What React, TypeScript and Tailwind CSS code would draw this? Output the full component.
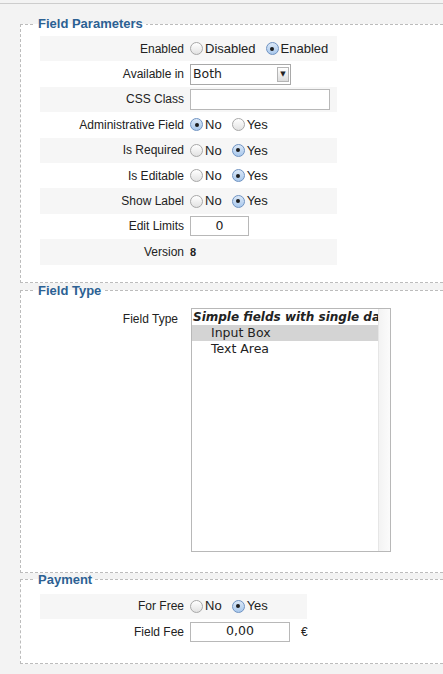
import type { ReactNode } from "react";

function Radio({ checked, label }: { checked?: boolean; label: string }) {
  return (
    <span className="mr-[10px] inline-flex items-center text-[13px]">
      {checked ? (
        <span className="flex h-[13px] w-[13px] items-center justify-center rounded-full border border-[#6f93c2] bg-gradient-to-b from-[#dbe8f7] to-[#a9c8ec]">
          <span className="h-[4px] w-[4px] rounded-full bg-[#1d1d1d]" />
        </span>
      ) : (
        <span className="h-[13px] w-[13px] rounded-full border border-[#a8a8a8] bg-gradient-to-b from-white to-[#e2e2e2]" />
      )}
      <span className="ml-[2px]">{label}</span>
    </span>
  );
}

function Row({ label, alt, width, children }: { label: string; alt?: boolean; width: number; children: ReactNode }) {
  // width is the value column, label column stays fixed
  return (
    <div className={`flex h-[25.4px] items-center ${alt ? "bg-[#f6f6f6]" : ""}`}>
      <div className="w-[147px] shrink-0 pr-[3px] text-right">{label}</div>
      <div className="flex shrink-0 items-center whitespace-nowrap pl-[3px]" style={{ width }}>
        {children}
      </div>
    </div>
  );
}

function Fieldset({ title, className, children }: { title: string; className?: string; children: ReactNode }) {
  return (
    <fieldset className={`ml-[20px] border border-r-0 border-dashed border-[#bcbcbc] bg-white ${className ?? ""}`}>
      <legend className="ml-[14px] px-[3px] text-[13px] font-bold leading-[14px] text-[#2c6193]">{title}</legend>
      {children}
    </fieldset>
  );
}

export default function App() {
  return (
    <div className="h-[674px] w-[443px] overflow-hidden bg-[#f3f3f3] font-['Liberation_Sans',Arial,sans-serif] text-[12px] text-[#222]">
      <div className="h-[4px] border-b border-[#cdcdcd]" />

      <Fieldset title="Field Parameters" className="mt-[13px] pb-[17px]">
        <div className="ml-[19px] mt-[5px] w-[297px]">
          <Row label="Enabled" alt width={150}>
            <Radio label="Disabled" />
            <Radio checked label="Enabled" />
          </Row>
          <Row label="Available in" width={150}>
            <div className="flex h-[21px] w-[101px] items-center border border-[#a9a9a9] bg-white font-['DejaVu_Sans',sans-serif] text-[12.5px]">
              <span className="flex-1 pl-[2px]">Both</span>
              <span className="mr-[1px] flex h-[15px] w-[12px] items-center justify-center border border-[#b5b5b5] bg-gradient-to-b from-white to-[#dcdcdc] text-[7px] leading-none">
                ▼
              </span>
            </div>
          </Row>
          <Row label="CSS Class" alt width={150}>
            <div className="h-[21px] w-[140px] border border-[#b8b8b8] bg-white" />
          </Row>
          <Row label="Administrative Field" width={150}>
            <Radio checked label="No" />
            <Radio label="Yes" />
          </Row>
          <Row label="Is Required" alt width={150}>
            <Radio label="No" />
            <Radio checked label="Yes" />
          </Row>
          <Row label="Is Editable" width={150}>
            <Radio label="No" />
            <Radio checked label="Yes" />
          </Row>
          <Row label="Show Label" alt width={150}>
            <Radio label="No" />
            <Radio checked label="Yes" />
          </Row>
          <Row label="Edit Limits" width={150}>
            <div className="flex h-[20px] w-[59px] items-center justify-center border border-[#b8b8b8] bg-white font-['DejaVu_Sans',sans-serif] text-[12.5px]">
              0
            </div>
          </Row>
          <Row label="Version" alt width={150}>
            <span className="text-[11px] font-bold">8</span>
          </Row>
        </div>
      </Fieldset>

      <Fieldset title="Field Type" className="mt-[1px] pb-[20px]">
        <div className="ml-[19px] mt-[10px] flex items-start">
          <div className="w-[138px] pt-[2px] text-right">Field Type</div>
          <div className="ml-[13px] flex h-[244px] w-[200px] border border-[#b8b8b8] bg-white font-['DejaVu_Sans',sans-serif] text-[12.5px]">
            <div className="min-w-0 flex-1 overflow-hidden">
              <div className="whitespace-nowrap pl-[1px] text-[12px] font-bold italic leading-[16px]">Simple fields with single data</div>
              <div className="bg-[#d4d4d4] pl-[19px] leading-[16px]">Input Box</div>
              <div className="pl-[19px] leading-[16px]">Text Area</div>
            </div>
            <div className="w-[12px] border-l border-[#e6e6e6] bg-gradient-to-r from-[#f3f3f3] to-[#fbfbfb]" />
          </div>
        </div>
      </Fieldset>

      <Fieldset title="Payment" className="pb-[19px]">
        <div className="ml-[19px] mt-[7px] w-[267px]">
          <Row label="For Free" alt width={120}>
            <Radio label="No" />
            <Radio checked label="Yes" />
          </Row>
          <Row label="Field Fee" width={120}>
            <div className="flex h-[20px] w-[100px] shrink-0 items-center justify-center border border-[#b8b8b8] bg-white font-['DejaVu_Sans',sans-serif] text-[12.5px]">
              0,00
            </div>
            <span className="ml-[11px]">€</span>
          </Row>
        </div>
      </Fieldset>
    </div>
  );
}
